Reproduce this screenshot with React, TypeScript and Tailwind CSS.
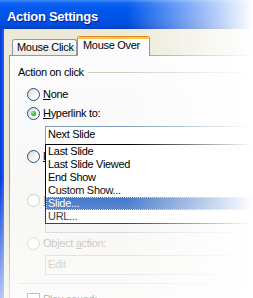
import type { ReactNode } from "react"

function Radio({ checked, disabled }: { checked?: boolean; disabled?: boolean }) {
  return (
    <span
      className={
        disabled
          ? "flex h-[13px] w-[13px] shrink-0 items-center justify-center rounded-full border border-[#CAC8BB] bg-white"
          : "flex h-[13px] w-[13px] shrink-0 items-center justify-center rounded-full border border-[#1C5180] bg-[linear-gradient(135deg,#D6D6D0,#FFFFFF_70%)]"
      }
    >
      {checked && <span className="h-[5px] w-[5px] rounded-full bg-[radial-gradient(circle_at_35%_35%,#9BF29A,#21A121_70%)]" />}
    </span>
  )
}

// hidden: label sits under the open list, only its first letter peeks out
function RadioRow({ label, checked, disabled, hidden, className }: { label: ReactNode; checked?: boolean; disabled?: boolean; hidden?: boolean; className: string }) {
  let cls = "ml-[3px] whitespace-nowrap"
  if (disabled) cls += " text-[#ACA899]"
  if (hidden) cls += " w-[2px] overflow-hidden"
  return (
    <div className={"ml-[17px] flex h-[13px] items-center " + className}>
      <Radio checked={checked} disabled={disabled} />
      <span className={cls}>{label}</span>
    </div>
  )
}

const items = ["Last Slide", "Last Slide Viewed", "End Show", "Custom Show...", "Slide...", "URL..."]

export default function App() {
  return (
    <div className="relative h-[298px] w-[253px] overflow-hidden bg-[#ECE9D8] font-['Liberation_Sans',Arial,sans-serif] text-[11px] leading-[13px] tracking-[-0.3px] text-black">
      {/* title bar */}
      <div className="h-[29px] bg-[linear-gradient(to_bottom,#3D8BF7_0%,#0F62F2_10%,#0058EE_30%,#0055E8_60%,#004CDD_85%,#0040C4_100%)] pl-[7px] pt-[9px]">
        <span className="text-[13px] font-bold leading-[16px] text-white [text-shadow:1px_1px_0_#0A1E8C]">Action Settings</span>
      </div>

      <div className="flex">
        <div className="h-[269px] w-[4px] shrink-0 bg-[linear-gradient(to_right,#0831D9,#166AEE)]" />
        <div className="flex flex-1 flex-col pt-[7px]">
          {/* tabs */}
          <div className="relative z-10 -mb-px flex items-end pl-[8px]">
            <div className="mb-px h-[16px] w-[65px] rounded-t-[3px] border border-b-0 border-[#919B9C] bg-[linear-gradient(to_bottom,#FFFFFF,#ECEBE6)] pl-[4px] pt-[1px] whitespace-nowrap">
              Mouse Click
            </div>
            <div className="flex h-[20px] w-[73px] flex-col rounded-t-[3px] border-x border-t border-[#919B9C] border-t-[#E68B2C] bg-[#FCFCFE]">
              <div className="h-[2px] bg-[#FFC73C]" />
              <span className="pl-[5px] whitespace-nowrap">Mouse Over</span>
            </div>
          </div>

          {/* panel */}
          <div className="relative ml-[5px] -mr-[30px] flex h-[260px] flex-col border border-[#919B9C] bg-[linear-gradient(to_bottom,#FCFCFE,#F4F3EE)]">
            <div className="ml-[8px] mt-[10px] flex items-center">
              <span className="whitespace-nowrap">Action on click</span>
              <span className="ml-[4px] h-px flex-1 bg-[#D0D0BF]" />
            </div>

            <RadioRow className="mt-[9px]" label={<><u>N</u>one</>} />
            <RadioRow className="mt-[6px]" checked label={<><u>H</u>yperlink to:</>} />

            <div className="ml-[35px] mt-[6px] h-[20px] border border-[#7F9DB9] bg-white pl-[2px] pt-[1px] whitespace-nowrap">Next Slide</div>

            <RadioRow className="mt-[4px]" hidden label={<><u>R</u>un program:</>} />
            <div className="ml-[35px] mt-[5px] h-[21px] border border-[#7F9DB9] bg-white" />
            <RadioRow className="mt-[5px]" disabled hidden label={<><u>R</u>un macro:</>} />
            <div className="ml-[35px] mt-[5px] h-[21px] border border-[#C5CCD9] bg-[#F5F4EF]" />
            <RadioRow className="mt-[4px]" disabled label={<>Object <u>a</u>ction:</>} />
            <div className="ml-[35px] mt-[5px] h-[20px] border border-[#C5CCD9] bg-[#F5F4EF] pl-[2px] pt-[2px] text-[#ACA899]">Edit</div>

            <div className="ml-[8px] mt-[8px] h-px bg-[#D0D0BF]" />

            <div className="ml-[17px] mt-[9px] flex h-[13px] items-center">
              <span className="h-[13px] w-[13px] shrink-0 border border-[#1C5180] bg-white" />
              <span className="ml-[3px] whitespace-nowrap"><u>P</u>lay sound:</span>
            </div>

            {/* open dropdown list */}
            <div className="absolute left-[35px] top-[88px] w-[240px] border border-black bg-white">
              {items.map((it) => (
                <div
                  key={it}
                  className={
                    it === "Slide..."
                      ? "h-[13px] bg-[#316AC5] pl-[2px] text-white outline-1 -outline-offset-1 outline-dotted outline-[#EFCB7E] whitespace-nowrap"
                      : "h-[13px] pl-[2px] whitespace-nowrap"
                  }
                >
                  {it}
                </div>
              ))}
            </div>
          </div>
        </div>
      </div>

      {/* screenshot fade-out */}
      <div className="pointer-events-none absolute inset-0 bg-[linear-gradient(to_right,rgba(255,255,255,0)_50%,rgba(255,255,255,0.6)_80%,#FFFFFF_100%)]" />
      <div className="pointer-events-none absolute inset-0 bg-[linear-gradient(to_bottom,rgba(255,255,255,0)_60%,rgba(255,255,255,0.7)_100%)]" />
    </div>
  )
}
